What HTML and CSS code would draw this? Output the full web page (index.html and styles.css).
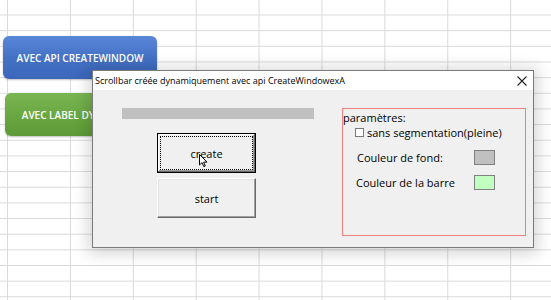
FILE: index.html
```html
<!DOCTYPE html>
<html lang="fr">
<head>
    <meta charset="utf-8">
    <title>Scrollbar créée dynamiquement</title>
    <link rel="stylesheet" href="styles.css">
</head>
<body>
    <div class="sheet">
        <div class="shape shape-blue">AVEC API CREATEWINDOW</div>
        <div class="shape shape-green">AVEC LABEL DYNAMIQUE</div>

        <div class="dialog">
            <div class="titlebar">
                <span class="title">Scrollbar créée dynamiquement avec api CreateWindowexA</span>
                <svg class="close" width="10" height="10" viewBox="0 0 10 10">
                    <path d="M0.5 0.5 L9.5 9.5 M9.5 0.5 L0.5 9.5" stroke="#222" stroke-width="1.1" fill="none"/>
                </svg>
            </div>

            <div class="dialog-body">
                <div class="left-col">
                    <div class="progress"></div>
                    <div class="buttons">
                        <button class="btn btn-default">
                            create
                            <svg class="cursor" width="9" height="14" viewBox="0 0 9 14">
                                <path d="M0.5 0.5 L0.5 11 L3 8.6 L4.8 12.6 L6.3 12 L4.6 8.1 L8 8.1 Z" fill="#fff" stroke="#000" stroke-width="1" stroke-linejoin="round"/>
                            </svg>
                        </button>
                        <button class="btn">start</button>
                    </div>
                </div>

                <div class="params">
                    <div class="params-title">paramètres:</div>
                    <div class="check-row">
                        <span class="checkbox"></span>
                        <span>sans segmentation(pleine)</span>
                    </div>
                    <div class="color-row">
                        <span class="color-label">Couleur de fond:</span>
                        <span class="swatch swatch-bg"></span>
                    </div>
                    <div class="color-row">
                        <span class="color-label">Couleur de la barre</span>
                        <span class="swatch swatch-bar"></span>
                    </div>
                </div>
            </div>
        </div>
    </div>
</body>
</html>
```

FILE: styles.css
```css
* {
    margin: 0;
    padding: 0;
    box-sizing: border-box;
}

body {
    width: 551px;
    height: 300px;
    overflow: hidden;
    font-family: 'Open Sans', 'Noto Sans', sans-serif;
    color: #000;
    background: #fff;
}

/* feuille excel en fond */
.sheet {
    position: relative;
    width: 551px;
    height: 300px;
    background-color: #fff;
    background-image:
        linear-gradient(to right, #dadada 1px, transparent 1px),
        linear-gradient(to bottom, #dadada 1px, transparent 1px);
    background-size: 62.9px 15.67px;
    background-position: 7px 14.5px;
}

.shape {
    position: absolute;
    height: 43px;
    width: 154px;
    border-radius: 6px;
    color: #fff;
    font-size: 10px;
    font-weight: 600;
    display: flex;
    align-items: center;
    justify-content: center;
    box-shadow: 0 1px 2px rgba(0, 0, 0, 0.25);
}

.shape-blue {
    left: 3px;
    top: 36px;
    background: linear-gradient(to bottom, #5a86d8 0%, #4472c4 50%, #3b66bc 100%);
}

.shape-green {
    left: 5px;
    top: 93px;
    background: linear-gradient(to bottom, #7ab653 0%, #6aa842 50%, #5e9a38 100%);
}

/* fenetre */
.dialog {
    position: absolute;
    left: 92px;
    top: 70px;
    width: 442px;
    height: 178px;
    border: 1px solid #7a7a7a;
    background: #f0f0f0;
    box-shadow: 0 2px 14px 4px rgba(0, 0, 0, 0.16);
    display: flex;
    flex-direction: column;
}

.titlebar {
    height: 19px;
    background: #fff;
    display: flex;
    align-items: center;
    justify-content: space-between;
    padding: 0 6px 0 2px;
    font-size: 9px;
}

.close {
    display: block;
}

.dialog-body {
    flex: 1;
    display: flex;
    gap: 28px;
    padding: 18px 7px 11px 29px;
}

.left-col {
    width: 192px;
}

.progress {
    height: 11px;
    background: #c0c0c0;
}

.buttons {
    display: flex;
    flex-direction: column;
    gap: 5px;
    margin: 14px 0 0 35px;
}

.btn {
    position: relative;
    width: 99px;
    height: 40px;
    font-family: inherit;
    font-size: 11px;
    color: #000;
    background: #f0f0f0;
    border: 1px solid;
    border-color: #fff #696969 #696969 #fff;
    box-shadow: inset -1px -1px #a0a0a0, inset 1px 1px #e3e3e3;
}

.btn-default {
    border: 1px solid #000;
    box-shadow: inset -1px -1px #696969, inset 1px 1px #fff, inset -2px -2px #a0a0a0;
    outline: 1px dotted #000;
    outline-offset: -4px;
}

.cursor {
    position: absolute;
    left: 41px;
    top: 20px;
}

/* parametres */
.params {
    width: 184px;
    border: 1px solid #ea8080;
    font-size: 11px;
    padding: 1px 0 0 0;
}

.params-title {
    line-height: 15px;
}

.check-row {
    display: flex;
    align-items: center;
    height: 14px;
    padding-left: 12px;
}

.checkbox {
    width: 9px;
    height: 9px;
    border: 1px solid #7a7a7a;
    background: #fff;
    margin-right: 3px;
}

.color-row {
    display: flex;
    align-items: center;
    height: 15px;
    margin-top: 11px;
    padding-left: 14px;
}

.color-row + .color-row {
    margin-top: 10px;
    padding-left: 13px;
}

.color-label {
    width: 117px;
}

.color-row + .color-row .color-label {
    width: 118px;
}

.swatch {
    width: 21px;
    height: 15px;
    border: 1px solid #808080;
}

.swatch-bg {
    background: #c0c0c0;
}

.swatch-bar {
    background: #c0ffc0;
}
```
